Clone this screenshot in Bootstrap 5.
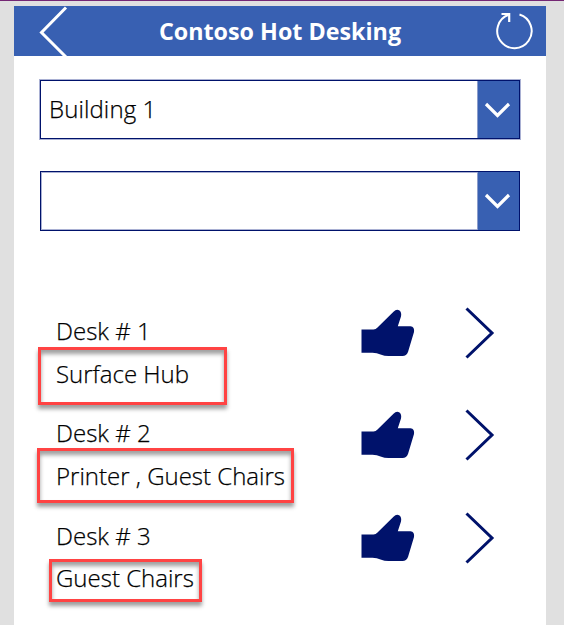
<!DOCTYPE html>
<html lang="en">
<head>
<meta charset="utf-8">
<meta name="viewport" content="width=device-width, initial-scale=1">
<title>Contoso Hot Desking</title>
<link href="https://cdn.jsdelivr.net/npm/bootstrap@5.3.0/dist/css/bootstrap.min.css" rel="stylesheet">
<style>
body{background:#e0e0e0;border-top:1px solid #742774;font-family:"Open Sans","Noto Sans",sans-serif;font-size:24px;font-weight:300;color:#000;height:625px;overflow:hidden}
svg{display:block;flex:none}
.app-screen{width:532px;height:619px;margin:5px 0 0 14px}
.app-bar{height:50px;background:#3860b2;padding:0 12px 0 24px}
.app-title{font-size:23.3px;font-weight:700;line-height:50px;margin-left:-6px}
.filters{padding:24px 26.5px 0 26px;gap:32px}
.combo{height:59px;border:1px solid #00126b;line-height:56px;box-shadow:0 0 0 1px #a9b0d3}
.combo-last{height:60px;box-shadow:inset 0 0 0 1px #a9b0d3}
.combo-text{padding-left:8px}
.combo-text,.desk-line{-webkit-text-stroke:.25px #000}
.combo-text{letter-spacing:.1px}
.combo-btn{width:42px;background:#3860b2;border-left:1px solid #8c9dcb}
.desks{padding:76px 49.5px 0 42px}
.desk{height:102px}
.desk:last-child{margin-top:1px}
.desk-text{margin-top:2px}
.desk-line{height:43px;line-height:43px;white-space:nowrap}
.desk:last-child .desk-line + .desk-line{line-height:42px}
.desk-thumb{margin-right:48px}
.note{display:block;position:absolute;border:3px solid #ff4343;box-shadow:0 4px 4px rgba(0,0,0,.38),inset 0 4px 4px rgba(0,0,0,.38);pointer-events:none}
.note-1{left:-18px;top:40px;width:189px;height:58px}
.note-2{left:-19px;top:39px;width:257px;height:55px}
.note-3{left:-7px;top:47px;width:153px;height:43px}
</style>
</head>
<body>
<main class="app-screen bg-white">
  <header class="app-bar d-flex justify-content-between align-items-start text-white">
    <svg width="32" height="50" viewBox="0 0 32 50" fill="none" stroke="#fff" stroke-width="3"><path d="M28 1.500 3.500 26.500 28 51"/></svg>
    <h1 class="app-title mb-0">Contoso Hot Desking</h1>
    <svg width="38" height="50" viewBox="0 0 38 50" fill="none" stroke="#fff" stroke-width="2"><path d="M23.500 8.500A17.200 17.200 0 1 1 12.500 8.800"/><path d="M5.500 8H13.200V16" stroke-width="2.200"/></svg>
  </header>
  <section class="filters d-flex flex-column">
    <div class="combo d-flex">
      <div class="combo-text flex-grow-1">Building 1</div>
      <div class="combo-btn d-flex align-items-center justify-content-center"><svg width="28" height="20" viewBox="0 0 28 20" fill="none" stroke="#fff" stroke-width="3.2"><path d="M2 4 13.500 15.500 25 4"/></svg></div>
    </div>
    <div class="combo combo-last d-flex">
      <div class="combo-text flex-grow-1"></div>
      <div class="combo-btn d-flex align-items-center justify-content-center"><svg width="28" height="20" viewBox="0 0 28 20" fill="none" stroke="#fff" stroke-width="3.2"><path d="M2 4 13.500 15.500 25 4"/></svg></div>
    </div>
  </section>
  <section class="desks">
    <div class="desk d-flex position-relative">
      <div class="desk-text flex-grow-1"><div class="desk-line">Desk # 1</div><div class="desk-line">Surface Hub</div></div>
      <svg class="desk-thumb" width="55" height="52" viewBox="360.5 307 55 52"><use href="#thumb"/></svg>
      <svg width="33" height="54" viewBox="464 307 33 54"><use href="#next"/></svg>
      <span class="note note-1"></span>
    </div>
    <div class="desk d-flex position-relative">
      <div class="desk-text flex-grow-1"><div class="desk-line">Desk # 2</div><div class="desk-line">Printer , Guest Chairs</div></div>
      <svg class="desk-thumb" width="55" height="52" viewBox="360.5 307 55 52"><use href="#thumb"/></svg>
      <svg width="33" height="54" viewBox="464 307 33 54"><use href="#next"/></svg>
      <span class="note note-2"></span>
    </div>
    <div class="desk d-flex position-relative">
      <div class="desk-text flex-grow-1"><div class="desk-line">Desk # 3</div><div class="desk-line">Guest Chairs</div></div>
      <svg class="desk-thumb" width="55" height="52" viewBox="360.5 307 55 52"><use href="#thumb"/></svg>
      <svg width="33" height="54" viewBox="464 307 33 54"><use href="#next"/></svg>
      <span class="note note-3"></span>
    </div>
  </section>
</main>
<svg class="d-none" aria-hidden="true">
  <defs>
    <path id="thumb" fill="#00126b" d="M361 329.500H373Q375.300 329.300 377 327.500L393 311.700Q396 308.700 399 310.500Q401.300 312.300 400.500 316.500L397.300 326.300H410Q414.300 327 413.500 332L407.500 352Q406 356 402 356H388Q384 356 380 354.500Q376.500 352.800 372 352.800H361Z"/>
    <path id="next" fill="none" stroke="#00126b" stroke-width="3" d="M466.500 308.500 492 333 466.500 357.500"/>
  </defs>
</svg>
<script src="https://cdn.jsdelivr.net/npm/bootstrap@5.3.0/dist/js/bootstrap.bundle.min.js"></script>
</body>
</html>
